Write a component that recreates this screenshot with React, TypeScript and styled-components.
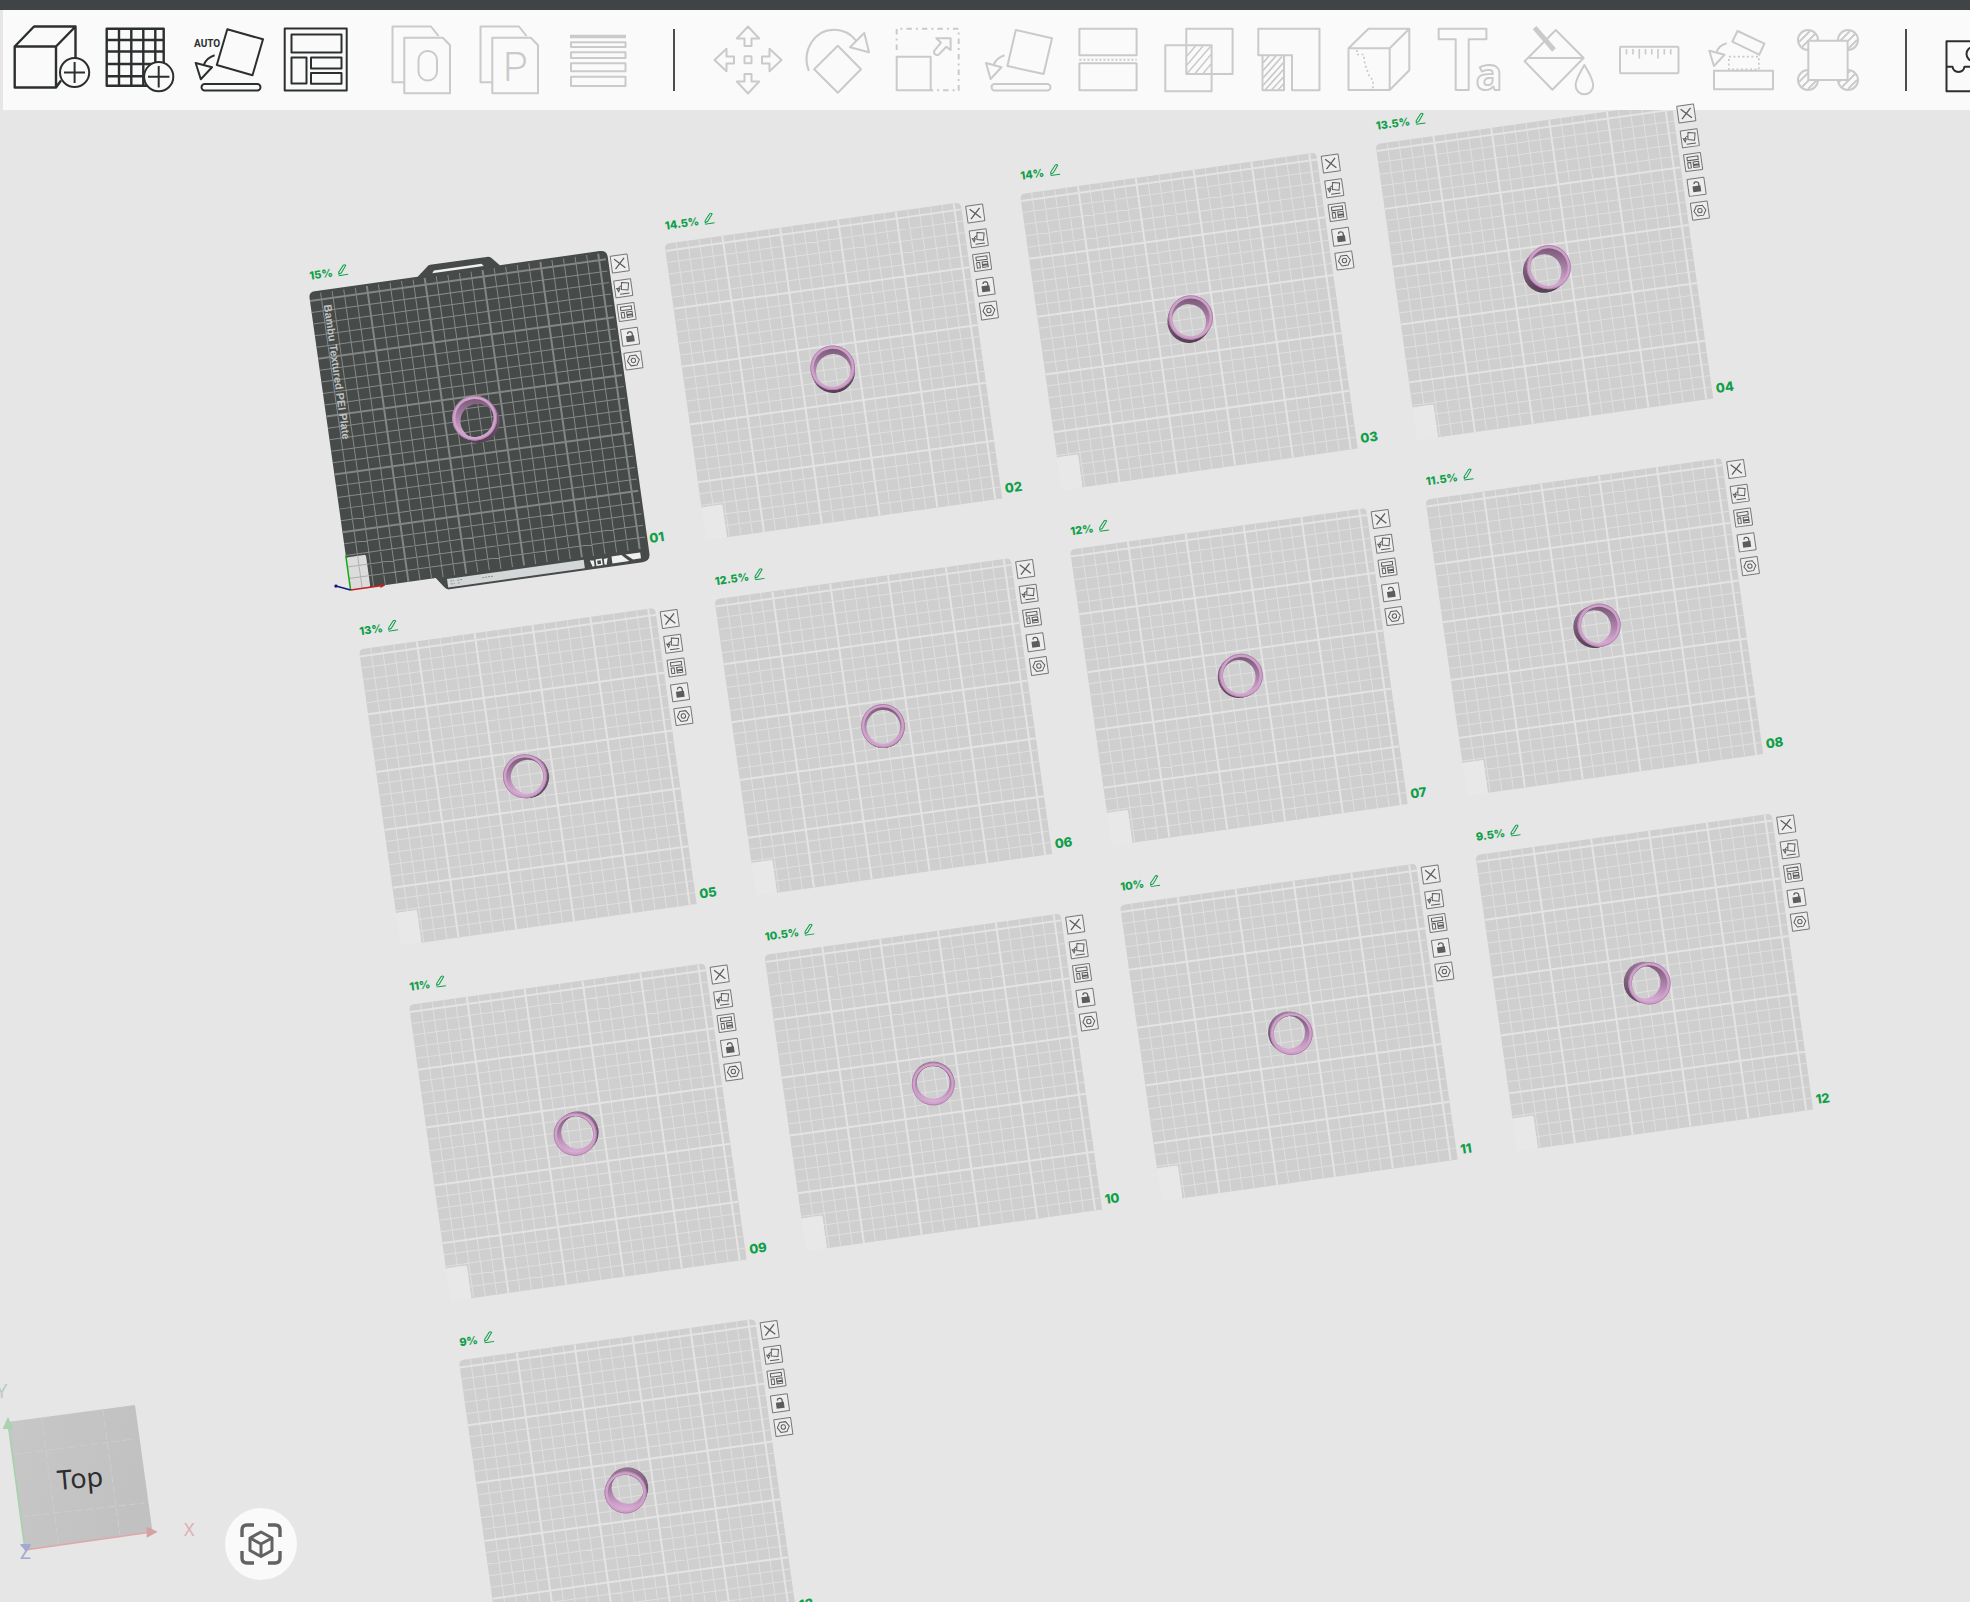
import React from "react";
import styled, { createGlobalStyle } from "styled-components";

const INK = "#2c2f30";
const MUTED = "#cacaca";
const GREEN = "#0f9f49";

const PLATE = 299;
const GAP = 60;
const CELL = PLATE / 25.6;

const GlobalStyle = createGlobalStyle`
  * { box-sizing: border-box; }
  body { margin: 0; background: #e6e6e6; font-family: Inter, "Liberation Sans", sans-serif; }
  button { padding: 0; border: 0; background: none; font: inherit; color: inherit; cursor: pointer; }
`;

/* ---------- page frame ---------- */

const Workspace = styled.div`
  position: relative;
  display: flex;
  flex-direction: column;
  height: 100vh;
  overflow: hidden;
  background: #e6e6e6;
`;

const TitleStrip = styled.header`
  flex: none;
  height: 10px;
  background: #3f4447;
  position: relative;
  z-index: 1;
`;

const Toolbar = styled.nav`
  position: relative;
  z-index: 1;
  flex: none;
  display: flex;
  align-items: center;
  height: 100px;
  margin-left: 3px;
  padding-left: 5px;
  background: #fafafa;
  overflow: hidden;
`;

const ToolGroup = styled.div<{ $before?: number }>`
  display: flex;
  flex: none;
  margin-left: ${(p) => p.$before ?? 0}px;
`;

const Divider = styled.div`
  flex: none;
  width: 2px;
  height: 62px;
  margin: 0 28px 0 32px;
  background: #4b4e50;
`;

const ToolButton = styled.button<{ $width: number }>`
  display: block;
  flex: none;
  width: ${(p) => p.$width}px;
  height: 100px;
  color: ${INK};
  &:disabled { color: ${MUTED}; cursor: default; }
`;

const ToolGlyph = styled.svg`
  display: block;
  width: 100%;
  height: 100%;
  fill: none;
  stroke: currentColor;
  stroke-width: 2;
  stroke-linejoin: round;
`;

const Stage = styled.main`
  flex: 1;
`;

/* ---------- build plates ---------- */

const Plane = styled.div<{ $layer: number }>`
  position: absolute;
  left: 309px;
  top: 294px;
  z-index: ${(p) => p.$layer};
  display: grid;
  grid-template-columns: repeat(4, ${PLATE}px);
  grid-auto-rows: ${PLATE}px;
  gap: ${GAP}px;
  transform: rotate(-8deg);
  transform-origin: 0 0;
  pointer-events: none;
`;

const PlateCell = styled.section`
  position: relative;
`;

const PlateDrawing = styled.svg`
  display: block;
  width: 100%;
  height: 100%;
  overflow: visible;
`;

const PlateName = styled.div`
  position: absolute;
  left: 3px;
  bottom: calc(100% + 10px);
  display: flex;
  align-items: center;
  gap: 5px;
  color: ${GREEN};
  font-size: 11px;
  line-height: 16px;
  font-weight: 800;
  white-space: nowrap;
`;

const RenameButton = styled.button`
  width: 11px;
  height: 12px;
  margin-bottom: 3px;
  pointer-events: auto;
  svg { display: block; width: 100%; height: 100%; }
`;

const PlateNumber = styled.div`
  position: absolute;
  left: 303px;
  bottom: 2px;
  color: ${GREEN};
  font-size: 13px;
  line-height: 16px;
  font-weight: 800;
`;

const PlateTools = styled.div`
  position: absolute;
  left: 303px;
  top: 4px;
  height: 116px;
  display: flex;
  flex-direction: column;
  justify-content: space-between;
`;

const PlateTool = styled.button`
  width: 18px;
  height: 18px;
  border: 1px solid #777;
  border-radius: 1px;
  background: #ededed;
  color: #5c5c5c;
  pointer-events: auto;
  svg { display: block; width: 16px; height: 16px; fill: none; stroke: currentColor; }
`;

/* ---------- overlay controls ---------- */

const ViewCube = styled.button`
  position: absolute;
  left: 0;
  bottom: 0;
  z-index: 2;
  width: 220px;
  height: 242px;
  svg { display: block; width: 100%; height: 100%; }
  text { font-family: "Noto Sans", sans-serif; }
`;

const FitButton = styled.button`
  position: absolute;
  left: 225px;
  bottom: 22px;
  z-index: 2;
  display: grid;
  place-items: center;
  width: 72px;
  height: 72px;
  border-radius: 50%;
  background: #fafafa;
  svg { width: 42px; height: 42px; }
`;

/* ---------- toolbar icons: one shared sheet, each button shows its own slice ---------- */

type Tool = { name: string; art: React.ReactNode };

const fileTools: Tool[] = [
  {
    name: "Add object",
    art: (
      <>
        <path d="M14.7 46.5H56v41H14.7zM14.7 46.5 34 26.5h41.5L56 46.5M75.5 26.5V59M56 87.5l5-7" strokeWidth="2.4" />
        <circle cx="74.6" cy="72.5" r="14.6" fill="#fafafa" />
        <path d="M74.6 62v21M64 72.5h21" />
      </>
    ),
  },
  {
    name: "Add plate",
    art: (
      <>
        <path d="M106.7 28.7h57v57h-57zM119 28.7v57M131.3 28.7v57M143.3 28.7v57M155.3 28.7v57M106.7 40h57M106.7 51.5h57M106.7 64h57M106.7 76.3h57" strokeWidth="2.4" />
        <circle cx="158.7" cy="76.7" r="14.6" fill="#fafafa" />
        <path d="M158.7 66v21.4M148 76.7h21.4" />
      </>
    ),
  },
  {
    name: "Auto orient",
    art: (
      <>
        <text x="194" y="47" fontSize="10" fontWeight="700" fontFamily="Roboto, sans-serif" fill="currentColor" stroke="none">AUTO</text>
        <path d="M227.3 29.3 263 39.3 252.5 75.3 216.8 65zM214.6 55.3q-8 2.5-10.9 9.7M195.7 63l16.3 4.3-11.2 12z" />
        <rect x="201.5" y="84" width="59" height="6.5" rx="3.2" />
      </>
    ),
  },
  {
    name: "Arrange",
    art: (
      <path d="M284.7 28.5h62v62h-62zM291.5 34.5h50v18h-50zM291.5 57.5h15v26h-15zM311 57.5h30.5v11H311zM311 73h30.5v10.7H311z" />
    ),
  },
];

const splitTools: Tool[] = [
  {
    name: "Split to objects",
    art: (
      <>
        <path d="M403.7 82.3h-11.2V26.5h38.5l7.5 9.5M404.3 37.7h38.5l7.2 7.5v48h-45.7z" />
        <rect x="418.5" y="51" width="18.5" height="29.5" rx="9" />
      </>
    ),
  },
  {
    name: "Split to parts",
    art: (
      <>
        <path d="M491.7 82.3h-11.2V26.5H519l7.5 9.5M492.3 37.7h38.5l7.2 7.5v48h-45.7z" />
        <text x="503" y="81" fontSize="40" fontWeight="300" fontFamily="Roboto, sans-serif" fill="currentColor" stroke="none">P</text>
      </>
    ),
  },
  {
    name: "Variable layer height",
    art: (
      <>
        <path d="M570 36.5h56" strokeWidth="3.5" />
        <path d="M571 42.3h54.5v4.7H571zM571 52.3h54.5v5.7H571zM571 63.3h54.5v8H571zM571 76.7h54.5v9.3H571z" />
      </>
    ),
  },
];

const ARROW_UP = "M748 26.5 759.2 38.5H751.5V46H744.5V38.5H736.8z";

const editTools: Tool[] = [
  {
    name: "Move",
    art: (
      <>
        <path d={ARROW_UP} />
        <path d={ARROW_UP} transform="rotate(90 748 60)" />
        <path d={ARROW_UP} transform="rotate(180 748 60)" />
        <path d={ARROW_UP} transform="rotate(270 748 60)" />
        <rect x="744.5" y="56.3" width="7" height="7" rx="0.5" />
      </>
    ),
  },
  {
    name: "Rotate",
    art: (
      <path d="M808.8 71C801 50 815 29.7 834.4 29.7c9 0 16.6 4.3 21.6 11M864.3 33 850 47.3l19 5zM837.8 45.7 861 69.3 837.8 92.7 814.2 69.3z" />
    ),
  },
  {
    name: "Scale",
    art: (
      <>
        <path d="M896.7 50V28.7h62v61.6h-28" strokeDasharray="5.5 4 2 4" />
        <path d="M896.7 56.7h34v33.6h-34zM936.3 38.3h14.3V50l-4.2-3.3-8 8.2q-2 .8-3.5-.8-1.5-1.4-.5-3.4l6.6-8z" />
      </>
    ),
  },
  {
    name: "Lay on face",
    art: (
      <>
        <path d="M1015.8 30 1052 38.3 1043.6 74 1007.4 66zM1004.5 55.3q-8 2.5-11 9.7M986 63l15.5 4.3L990.6 79z" />
        <rect x="991.5" y="84" width="59" height="6.5" rx="3.2" />
      </>
    ),
  },
  {
    name: "Cut",
    art: (
      <>
        <path d="M1079.4 28.7h57.2v26.6h-57.2zM1079.4 63.3h57.2v27h-57.2z" />
        <path d="M1079.4 59.7h57.2" strokeDasharray="2 2" />
      </>
    ),
  },
  {
    name: "Mesh boolean",
    art: (
      <>
        <path d="M1186.3 28.7h46.3V74h-46.3zM1165.3 45.3h46.3v46h-46.3z" />
        <path d="M1187 56l8.5-10M1187 65l16-19M1187 73.5l23.5-27M1195 73.5l16-19M1203 73.5l8-9.5" strokeWidth="1.5" />
      </>
    ),
  },
  {
    name: "Support painting",
    art: (
      <>
        <path d="M1258.3 28.7h61.2v61.6H1292V55.3h-33.7zM1262.5 55.3h21.5v35h-21.5z" />
        <path d="M1263 63l6-7M1263 70.5l13-14.5M1263 78l19-21.5M1263 85.5l20.5-23M1265 90l18.5-20.5M1271.5 90l12-13M1278 90l5.5-6" strokeWidth="1.8" />
      </>
    ),
  },
  {
    name: "Seam painting",
    art: (
      <>
        <path d="M1348.5 48.3h41.2V90h-41.2zM1348.5 48.3l20-19.6h40.8l-19.6 19.6M1409.3 28.7v41.6L1389.7 90" />
        <path d="M1357 50v4.5h6.5l1.5 10 4 11 4 5V90" strokeDasharray="2 2.5" strokeWidth="1.7" />
      </>
    ),
  },
  {
    name: "Text shape",
    art: (
      <>
        <path d="M1438.7 28.7h47.7v10.6h-17.7V90h-13V39.3h-17z" />
        <text x="1475.5" y="90" fontSize="45" fontWeight="700" fontFamily="Open Sans, sans-serif" strokeWidth="1.8">a</text>
      </>
    ),
  },
  {
    name: "Color painting",
    art: (
      <>
        <path d="M1555.8 30 1583.6 58l-31.2 31.7-27.8-28.4zM1528 58h55.6" />
        <path d="M1534.6 27.7 1554 50" strokeWidth="5" />
        <path d="M1584.4 65c4.5 8 8.8 14 8.8 20.5a8.8 8.8 0 0 1-17.6 0c0-6.5 4.3-12.5 8.8-20.5z" fill="#fafafa" />
      </>
    ),
  },
  {
    name: "Measure",
    art: (
      <>
        <rect x="1620" y="46.7" width="58.5" height="26.6" rx="1" />
        <path d="M1626.5 49v5.5M1633 49v5.5M1639.3 49v9.5M1645.5 49v5.5M1651.8 49v5.5M1658 49v9.5M1664.3 49v5.5M1670.7 49v5.5" strokeWidth="1.6" />
      </>
    ),
  },
  {
    name: "Assembly",
    art: (
      <>
        <path d="M1737.5 31 1764.4 43.7 1759.2 54.7 1732.3 41.7zM1714 70.7h59v18.6h-59zM1709.3 50.7l15.2 4-10.5 11.3zM1726.7 43.3q-8 2-10 9" />
        <path d="M1728.9 56.7h30v12.6h-30z" strokeDasharray="2 2.5" strokeWidth="1.7" />
      </>
    ),
  },
  {
    name: "Brim ears",
    art: (
      <>
        {[[1808, 40], [1848, 40], [1808, 80], [1848, 80]].map(([x, y]) => (
          <g key={`${x}-${y}`}>
            <circle cx={x} cy={y} r="10" />
            <path d={`M${x - 9} ${y + 2}l11-11M${x - 6} ${y + 7}l13-13M${x} ${y + 9}l9-9`} strokeWidth="1.8" />
          </g>
        ))}
        <path d="M1808.3 40.7h39.3V80h-39.3z" fill="#fafafa" />
      </>
    ),
  },
];

const viewTools: Tool[] = [
  {
    name: "Assembly view",
    art: (
      <>
        <path d="M1946.5 41.3h62v50h-62zM1946.5 66.7h6c1 7 11 7 12 0h25" />
        <circle cx="1973.5" cy="54" r="7" />
      </>
    ),
  },
];

function Tools({ tools, start, width, before, disabled }: {
  tools: Tool[]; start: number; width: number; before?: number; disabled?: boolean;
}) {
  return (
    <ToolGroup $before={before}>
      {tools.map((tool, i) => (
        <ToolButton key={tool.name} type="button" aria-label={tool.name} $width={width} disabled={disabled}>
          <ToolGlyph viewBox={`${start + i * width} 10 ${width} 100`} aria-hidden="true">{tool.art}</ToolGlyph>
        </ToolButton>
      ))}
    </ToolGroup>
  );
}

/* ---------- plate drawing ---------- */

const plates = ["15%", "14.5%", "14%", "13.5%", "13%", "12.5%", "12%", "11.5%", "11%", "10.5%", "10%", "9.5%", "9%"];

const lines = (major: boolean) =>
  Array.from({ length: 25 }, (_, i) => i + 1)
    .filter((k) => (k % 5 === 0) === major)
    .map((k) => `M${(k * CELL).toFixed(2)} 0V${PLATE}M0 ${(PLATE - k * CELL).toFixed(2)}H${PLATE}`)
    .join("");

const MINOR = lines(false);
const MAJOR = lines(true);
const SHEET = `M5 0H294Q299 0 299 5V299H21V266H0V5Q0 0 5 0z`;

/* The camera hangs over one point of the plane; the top of each ring leans away from it. */
const CAMERA = { u: 538, v: 638 };
const LEAN = 0.0072;

function Ring({ index }: { index: number }) {
  const u = (index % 4) * (PLATE + GAP) + PLATE / 2;
  const v = Math.floor(index / 4) * (PLATE + GAP) + PLATE / 2;
  const base = { x: PLATE / 2, y: PLATE / 2 };
  const top = { x: base.x + (u - CAMERA.u) * LEAN, y: base.y + (v - CAMERA.v) * LEAN };
  const r = 22.4 - index * 0.11;
  return (
    <g>
      <defs>
        <clipPath id={`bore-${index}`}><circle cx={top.x} cy={top.y} r={r - 3.6} /></clipPath>
        <mask id={`ring-${index}`} maskUnits="userSpaceOnUse" x="100" y="100" width="100" height="100">
          <rect x="100" y="100" width="100" height="100" fill="#fff" />
          <circle cx={base.x} cy={base.y} r={r - 5} fill="#000" clipPath={`url(#bore-${index})`} />
        </mask>
      </defs>
      <g mask={`url(#ring-${index})`}>
        <circle cx={base.x} cy={base.y} r={r - 0.6} fill="url(#ring-side)" />
        <circle cx={(base.x + top.x) / 2} cy={(base.y + top.y) / 2} r={r - 0.3} fill="url(#ring-side)" />
        <circle cx={top.x} cy={top.y} r={r} fill="#cfa2ca" />
        <circle cx={top.x} cy={top.y} r={r - 0.4} fill="none" stroke="#a97ca6" strokeWidth="0.8" />
        <circle cx={top.x} cy={top.y} r={r - 3.2} fill="url(#ring-bore)" />
      </g>
    </g>
  );
}

function LightPlate() {
  return (
    <>
      <path d={SHEET} fill="#cfcfcf" />
      <g fill="none" clipPath="url(#sheet)">
        <path d={MINOR} stroke="#dfdfdf" />
        <path d={MAJOR} stroke="#e4e4e4" strokeWidth="2" />
      </g>
      <rect x="0" y="266" width="21" height="33" rx="2" fill="#e8e8e8" />
    </>
  );
}

function ActivePlate() {
  return (
    <>
      <path
        d="M6-2H110L120-10Q122-12 124-12H181Q184-12 186-10L193-2H294Q301-2 301 5V304Q301 312 293 312H98Q95 312 93 309L86 299H0V4Q0-2 6-2z"
        fill="#464a49"
      />
      <path d="M125-3.5 127-6H175L177-3.5z" fill="#f0f0f0" />
      <g fill="none" clipPath="url(#sheet)">
        <path d={MINOR} stroke="#868988" />
        <path d={MAJOR} stroke="#838685" strokeWidth="2" />
      </g>
      <text transform="translate(13 13) rotate(90)" fill="#bfc2c1" fontSize="11" fontWeight="700" fontFamily="Liberation Sans, sans-serif">
        Bambu Textured PEI Plate
      </text>
      <rect x="97" y="301.5" width="138" height="8.5" fill="#d3d7d7" />
      <path d="M100 304h4M100 307h4M107 304h5M107 307h3M132 305h12" stroke="#8d9191" strokeDasharray="2 1" />
      <path d="M241 303l4 .5v5.5l-2 .5zM259 303l-4 .5v5.5l2 .5z" fill="#f0f0f0" />
      <rect x="247.5" y="303.5" width="5" height="5" fill="none" stroke="#f0f0f0" strokeWidth="1.5" />
      <path d="M263 302H273L280 309H263zM277 302H292V308H284z" fill="#f0f0f0" />
      <rect x="0" y="266" width="20" height="33" rx="2" fill="#dcdcdc" />
      <path d="M11.7 266v33M0 275.6h20M0 287.3h20" stroke="#aeb0af" />
      <g fill="none" strokeWidth="1.5">
        <path d="M0 299V264" stroke="#18a818" />
        <path d="M0 299H34" stroke="#c22222" />
        <path d="M0 299-14 293" stroke="#15157e" />
      </g>
      <path d="M30 297l5 2-5 2z" fill="#c22222" />
      <circle cx="-14" cy="293" r="1.6" fill="#15157e" />
    </>
  );
}

const plateTools = [
  { name: "Remove plate", art: <path d="M3 3l10 10M13 3L3 13" strokeWidth="1.3" /> },
  { name: "Auto orient plate", art: <path d="M7 2l7 1.500-1.500 7-6.500-1.500zM4 13.500h9.500M3 8.500q.500-2.500 3-3M1.500 7.500l3 .500-1.500 3z" /> },
  { name: "Arrange plate", art: <path d="M2.5 2.5h11v3.500h-11zM2.5 8h3v5.5h-3zM8 8h5.5v2.500H8zM8 11.500h5.5v2H8z" /> },
  {
    name: "Lock plate",
    art: (
      <>
        <rect x="4" y="7" width="8" height="6" fill="currentColor" stroke="none" />
        <path d="M6 5V4.5Q6 3 8 3t2.5 1.5V8" strokeWidth="1.3" />
      </>
    ),
  },
  {
    name: "Plate settings",
    art: (
      <>
        <path d="M5 3h6l3 5-3 5H5L2 8z" />
        <circle cx="8" cy="8" r="2.2" />
      </>
    ),
  },
];

export default function App() {
  return (
    <Workspace>
      <GlobalStyle />
      <TitleStrip />
      <Toolbar aria-label="Tools">
        <Tools tools={fileTools} start={8} width={88} />
        <Tools tools={splitTools} start={377} width={88} before={17} disabled />
        <Divider />
        <Tools tools={editTools} start={703} width={90} disabled />
        <Divider />
        <Tools tools={viewTools} start={1935} width={88} />
      </Toolbar>
      <Stage>
        <Plane $layer={0}>
          {plates.map((name, i) => (
            <PlateCell key={name}>
              <PlateDrawing viewBox={`0 0 ${PLATE} ${PLATE}`} aria-hidden="true">
                {i === 0 && (
                  <defs>
                    <clipPath id="sheet"><path d="M5 0H294Q299 0 299 5V299H0V5Q0 0 5 0z" /></clipPath>
                    <linearGradient id="ring-side" x1="0" y1="0" x2="0" y2="1">
                      <stop offset="0" stopColor="#967494" />
                      <stop offset="1" stopColor="#563f55" />
                    </linearGradient>
                    <linearGradient id="ring-bore" x1="0.6" y1="0" x2="0.4" y2="1">
                      <stop offset="0" stopColor="#7a5a78" />
                      <stop offset="0.5" stopColor="#ab80a8" />
                      <stop offset="1" stopColor="#dcb0d8" />
                    </linearGradient>
                  </defs>
                )}
                {i === 0 ? <ActivePlate /> : <LightPlate />}
                <Ring index={i} />
              </PlateDrawing>
            </PlateCell>
          ))}
        </Plane>
        <Plane $layer={2}>
          {plates.map((name, i) => (
            <PlateCell key={name}>
              <PlateName>
                {name}
                <RenameButton type="button" aria-label={`Rename ${name}`}>
                  <svg viewBox="0 0 11 12" fill="none" stroke="currentColor" aria-hidden="true">
                    <path d="M1.5 7.5 7 1.2q1.5-.8 2.3.6L4 8.5l-2.7 1zM1 11h9.5" />
                  </svg>
                </RenameButton>
              </PlateName>
              <PlateTools>
                {plateTools.map((tool) => (
                  <PlateTool key={tool.name} type="button" aria-label={`${tool.name} ${i + 1}`}>
                    <svg viewBox="0 0 16 16" aria-hidden="true">{tool.art}</svg>
                  </PlateTool>
                ))}
              </PlateTools>
              <PlateNumber>{String(i + 1).padStart(2, "0")}</PlateNumber>
            </PlateCell>
          ))}
        </Plane>
      </Stage>
      <ViewCube type="button" aria-label="View cube">
        <svg viewBox="0 0 220 242">
          <defs>
            <linearGradient id="cube-face" x1="0" y1="0" x2="1" y2="0.3">
              <stop offset="0" stopColor="#c7c7c7" />
              <stop offset="1" stopColor="#c1c1c1" />
            </linearGradient>
          </defs>
          <path d="M7.5 62 135 45 152.5 171.7 25 190z" fill="url(#cube-face)" />
          <path d="M13.5 94.5 134 79M20 157 144 143M41.5 58l17 126M103 50l17 126" fill="none" stroke="#cdcdcd" strokeDasharray="8 3" />
          <path d="M8 62 25 190" stroke="#a3d3a8" strokeWidth="1.5" />
          <path d="M25 190 152 172" stroke="#dfa6ab" strokeWidth="1.5" />
          <path d="M8 57l5.5 12h-11z" fill="#a9d2ad" />
          <path d="M157.7 171.7l-11-5v11z" fill="#d6a0a5" />
          <path d="M20 184h11l-5 8z" fill="#a3a9d0" />
          <text x="58" y="130" fontSize="27" fill="#2d2d2d" transform="rotate(-5 58 130)">Top</text>
          <text x="184" y="176" fontSize="18" fill="#deb0b4">X</text>
          <text x="20" y="199" fontSize="19" fill="#a3a9d0">Z</text>
          <text x="-4" y="38" fontSize="20" fill="#bccbbd">Y</text>
        </svg>
      </ViewCube>
      <FitButton type="button" aria-label="Fit view">
        <svg viewBox="0 0 42 42" fill="none" stroke="#626262" strokeWidth="3.4" strokeLinejoin="round" aria-hidden="true">
          <path d="M2 14V7q0-5 5-5h7M28 2h7q5 0 5 5v7M40 28v7q0 5-5 5h-7M14 40H7q-5 0-5-5v-7" />
          <path d="M21 9l11 6v12.5L21 33.5 10 27.5V15zM10 15l11 6 11-6M21 21v12.5" strokeWidth="3" />
        </svg>
      </FitButton>
    </Workspace>
  );
}
